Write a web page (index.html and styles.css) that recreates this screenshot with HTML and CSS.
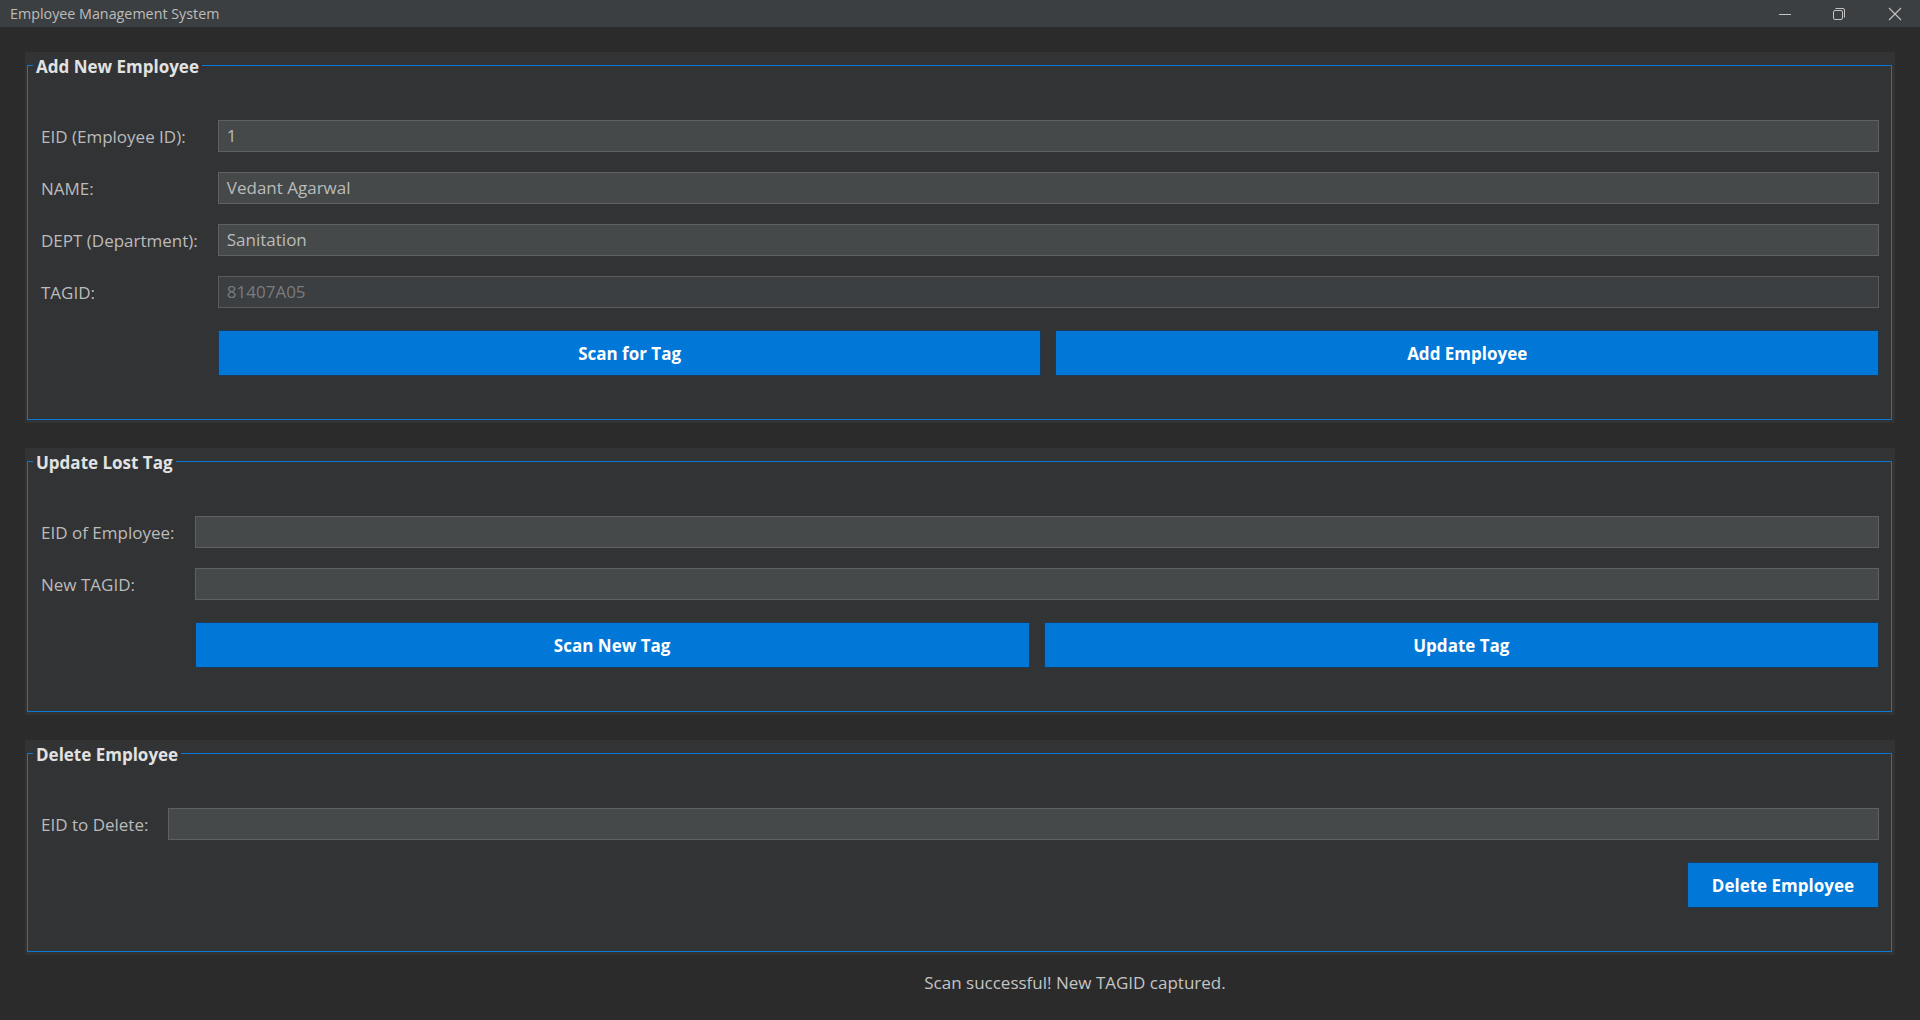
FILE: index.html
```html
<!DOCTYPE html>
<html lang="en">
<head>
<meta charset="utf-8">
<title>Employee Management System</title>
<link rel="stylesheet" href="styles.css">
</head>
<body>
<div class="window">
  <header class="titlebar">
    <span class="title">Employee Management System</span>
    <div class="controls">
      <span class="ctl">
        <svg width="14" height="14" viewBox="0 0 14 14"><path d="M1 7.5h12" stroke="#c4c4c4" stroke-width="1" fill="none"/></svg>
      </span>
      <span class="ctl">
        <svg width="14" height="14" viewBox="0 0 14 14" fill="none" stroke="#c4c4c4" stroke-width="1"><rect x="1.5" y="3.5" width="9" height="9" rx="1.5"/><path d="M3.5 1.5h7.5a1.5 1.5 0 0 1 1.5 1.5v7.5"/></svg>
      </span>
      <span class="ctl">
        <svg width="14" height="14" viewBox="0 0 14 14" fill="none" stroke="#c4c4c4" stroke-width="1.1"><path d="M1 1l12 12M13 1L1 13"/></svg>
      </span>
    </div>
  </header>

  <main class="main">
    <section class="panel">
      <fieldset class="group">
        <legend>Add New Employee</legend>
        <div class="form form-add">
          <label class="lbl">EID (Employee ID):</label>
          <div class="field">1</div>
          <label class="lbl">NAME:</label>
          <div class="field">Vedant Agarwal</div>
          <label class="lbl">DEPT (Department):</label>
          <div class="field">Sanitation</div>
          <label class="lbl">TAGID:</label>
          <div class="field field-ro">81407A05</div>
          <div class="spacer"></div>
          <div class="btn-row">
            <button class="btn">Scan for Tag</button>
            <button class="btn">Add Employee</button>
          </div>
        </div>
      </fieldset>
    </section>

    <section class="panel">
      <fieldset class="group">
        <legend>Update Lost Tag</legend>
        <div class="form">
          <label class="lbl">EID of Employee:</label>
          <div class="field"></div>
          <label class="lbl">New TAGID:</label>
          <div class="field"></div>
          <div class="spacer"></div>
          <div class="btn-row">
            <button class="btn">Scan New Tag</button>
            <button class="btn">Update Tag</button>
          </div>
        </div>
      </fieldset>
    </section>

    <section class="panel">
      <fieldset class="group">
        <legend>Delete Employee</legend>
        <div class="form">
          <label class="lbl">EID to Delete:</label>
          <div class="field"></div>
          <div class="spacer"></div>
          <div class="btn-row btn-row-end">
            <button class="btn btn-auto">Delete Employee</button>
          </div>
        </div>
      </fieldset>
    </section>

    <div class="status">Scan successful! New TAGID captured.</div>
  </main>
</div>
</body>
</html>
```

FILE: styles.css
```css
* { box-sizing: border-box; }

html, body {
  margin: 0;
  padding: 0;
  height: 100%;
}

body {
  background: #2b2b2b;
  font-family: "Open Sans", "Noto Sans", sans-serif;
  color: #bbbbbb;
  overflow: hidden;
}

.window {
  height: 1020px;
  display: flex;
  flex-direction: column;
}

.titlebar {
  height: 27px;
  background: #3c3f41;
  display: flex;
  align-items: center;
  justify-content: space-between;
  padding-left: 10px;
  flex: none;
}

.title {
  font-size: 14.3px;
  color: #bcbcbc;
}

.controls {
  display: flex;
  height: 100%;
}

.ctl {
  width: 55px;
  height: 27px;
  display: flex;
  align-items: center;
  justify-content: center;
}

.ctl:nth-child(1) { width: 48px; margin-right: 2px; }
.ctl:nth-child(3) { width: 50px; margin-left: 4px; }

.main {
  flex: 1;
  padding: 25px 25px 0 25px;
  display: flex;
  flex-direction: column;
  gap: 25px;
}

.panel {
  background: #313335;
  padding: 0 3px 3px 2px;
}

.group {
  margin: 0;
  border: 1px solid #0a78d6;
  padding: 42px 12px 43px 13px;
  min-width: 0;
}

.group legend {
  font-weight: 700;
  font-size: 17px;
  line-height: 22px;
  color: #e2e2e2;
  padding: 4px 3px 0 3px;
  margin-left: -8px;
}

.form {
  display: grid;
  grid-template-columns: auto 1fr;
  column-gap: 20px;
  row-gap: 20px;
  align-items: center;
}

.lbl {
  font-size: 17px;
  color: #bbbbbb;
  white-space: nowrap;
}

.field {
  height: 32px;
  background: #45494a;
  border: 1px solid #5e6163;
  font-size: 17px;
  line-height: 30px;
  padding-left: 8px;
  color: #bbbbbb;
}

.field-ro {
  background: #3c3f41;
  border-color: #595b5d;
  color: #797b7d;
}

.btn-row {
  display: grid;
  grid-template-columns: 1fr 1fr;
  column-gap: 14px;
  margin-top: 2px;
}

.btn-row-end {
  display: flex;
  justify-content: flex-end;
}

.btn {
  height: 46px;
  background: #0177d7;
  border: 1px solid #1d3a58;
  color: #ffffff;
  font-family: "Open Sans", "Noto Sans", sans-serif;
  font-weight: 700;
  font-size: 17px;
  margin: 0;
  padding: 0;
}

.btn-auto {
  padding: 0 24px;
}

.status {
  text-align: center;
  font-size: 17px;
  color: #c4c4c4;
  line-height: 22px;
  margin-top: -8px;
  padding-left: 230px;
}
```
